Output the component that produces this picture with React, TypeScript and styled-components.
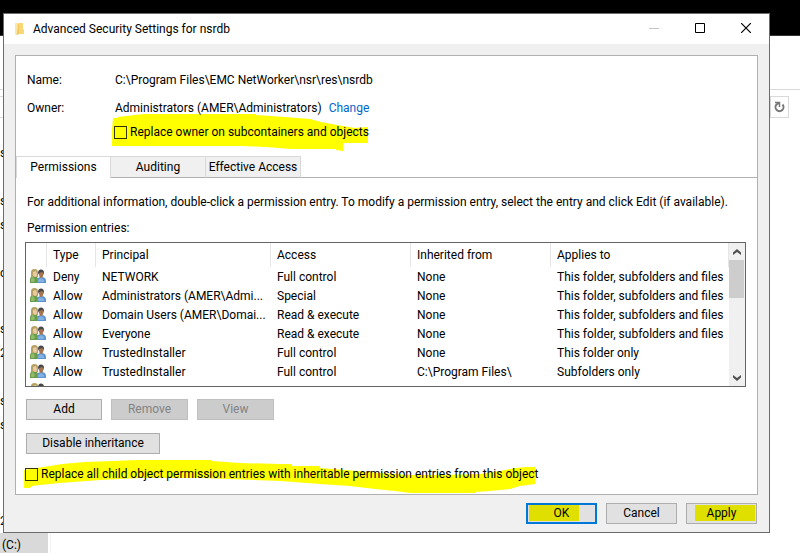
import React from 'react';
import styled, { createGlobalStyle } from 'styled-components';

const GlobalStyle = createGlobalStyle`
  *, *::before, *::after { box-sizing: border-box; }
  body { margin: 0; background: #fff; }
  body, button, input, table {
    font-family: Roboto, "Open Sans", sans-serif;
    font-size: 12px;
    line-height: 20px;
    color: #000;
  }
`;

const Desktop = styled.div`
  position: relative;
  isolation: isolate;
  min-height: 100vh;
  padding: 13px 30px 20px 3px;
  overflow: hidden;
`;

/* Explorer window that lies behind the dialog */
const Explorer = styled.div`
  position: absolute;
  inset: 0;
  z-index: -1;
  display: flex;
  flex-direction: column;
`;

const ExplorerTop = styled.div`
  flex: none;
  height: 36px;
  background: #000;
  border-bottom: 1px solid #333;
`;

const Ribbon = styled.div`
  flex: none;
  height: 54px;
  border-bottom: 1px solid #d9d9d9;
`;

const AddressBar = styled.div`
  flex: none;
  display: flex;
  justify-content: flex-end;
  height: 22px;
  margin: 6px 11px 23px 0;
  border: 1px solid #d9d9d9;
  border-left: 0;
`;

const RefreshButton = styled.button`
  display: flex;
  align-items: center;
  justify-content: center;
  width: 18px;
  padding: 0;
  border: 0;
  border-left: 1px solid #d9d9d9;
  background: #fff;
`;

const NavTree = styled.ul`
  width: 51px;
  flex: 1;
  margin: 0;
  padding: 0;
  list-style: none;
  border-right: 1px solid #f3f3f3;
`;

const NavItem = styled.li<{ $selected?: boolean; $newGroup?: boolean }>`
  height: 24px;
  width: 48px;
  line-height: 24px;
  margin-top: ${p => (p.$newGroup ? '32px' : '0')};
  padding-left: ${p => (p.$selected ? '2px' : '0')};
  background: ${p => (p.$selected ? '#d9d9d9' : 'transparent')};
`;

const Dialog = styled.main`
  display: flex;
  flex-direction: column;
  border: 1px solid #6b6b6b;
  background: #f0f0f0;
`;

const TitleBar = styled.header`
  display: flex;
  align-items: center;
  height: 30px;
  padding-left: 11px;
  background: #fff;
`;

const Title = styled.h1`
  flex: 1;
  margin: 0 0 0 8px;
  font-size: 12px;
  font-weight: 400;
`;

const CaptionButton = styled.button`
  display: flex;
  align-items: center;
  justify-content: center;
  width: 46px;
  height: 30px;
  padding: 0 0 2px;
  border: 0;
  background: transparent;
`;

const Body = styled.div`
  padding: 11px 11px 8px;
`;

const Panel = styled.section`
  position: relative;
  isolation: isolate;
  border: 1px solid #b0b0b0;
  background: #fff;
`;

const Summary = styled.dl`
  display: grid;
  grid-template-columns: 88px 1fr;
  margin: 0;
  padding: 10px 11px 0;
  line-height: 28px;
`;

const Term = styled.dt``;

const Detail = styled.dd`
  margin: 0;
  white-space: nowrap;
`;

const ChangeLink = styled.a`
  margin-left: 7px;
  color: #0066cc;
  text-decoration: none;
`;

const OwnerOption = styled.div`
  display: flex;
  padding: 0 0 14px 98px;
`;

const CheckLabel = styled.label`
  display: flex;
  align-items: center;
  gap: 3px;
  height: 20px;
  white-space: nowrap;
`;

const CheckBox = styled.input`
  appearance: none;
  flex: none;
  width: 13px;
  height: 13px;
  margin: 0;
  border: 1px solid #333300;
`;

const Marker = styled.svg<{ $place: 'owner' | 'inherit' }>`
  position: absolute;
  z-index: -1;
  left: ${p => (p.$place === 'owner' ? '96px' : '8px')};
  ${p => (p.$place === 'owner' ? 'top: 58px;' : 'bottom: 0;')}
  fill: #ffff00;
`;

const TabList = styled.div`
  display: flex;
  height: 22px;
`;

const Tab = styled.button<{ $active?: boolean }>`
  width: 95px;
  padding: ${p => (p.$active ? '0 0 1px' : '0')};
  border: solid #d9d9d9;
  border-width: 1px 1px 0 ${p => (p.$active ? '1px' : '0')};
  border-bottom: ${p => (p.$active ? '0' : '1px solid #b0b0b0')};
  background: ${p => (p.$active ? '#fff' : '#f0f0f0')};
  white-space: nowrap;
`;

const TabRule = styled.div`
  flex: 1;
  border-bottom: 1px solid #b0b0b0;
`;

const TabPage = styled.div`
  padding: 14px 11px 10px 9px;
`;

const Hint = styled.p`
  margin: 0 0 6px 2px;
  white-space: nowrap;
`;

const Caption = styled.p`
  margin: 0 0 4px 2px;
`;

const ListFrame = styled.div`
  display: flex;
  height: 145px;
  overflow: hidden;
  border: 1px solid #646464;
`;

const ListView = styled.div`
  flex: 1;
  min-width: 0;
  overflow: hidden;
`;

const Table = styled.table`
  width: 100%;
  table-layout: fixed;
  border-collapse: separate;
  border-spacing: 0;
`;

const Column = styled.col<{ $width?: number }>`
  width: ${p => (p.$width ? `${p.$width}px` : 'auto')};
`;

const HeadCell = styled.th`
  height: 24px;
  padding: 0 6px;
  border-right: 1px solid #e5e5e5;
  font-weight: 400;
  text-align: left;
`;

const Cell = styled.td`
  height: 19px;
  padding: 1px 0 0 6px;
  line-height: 18px;
  overflow: hidden;
  white-space: nowrap;
  text-overflow: ellipsis;
`;

const IconCell = styled.td`
  height: 19px;
  padding: 0 0 0 4px;
  line-height: 0;
`;

const ScrollBar = styled.div`
  display: flex;
  flex-direction: column;
  width: 16px;
  padding-right: 1px;
  background: #f0f0f0;
`;

const ScrollButton = styled.button`
  display: flex;
  align-items: center;
  justify-content: center;
  height: 17px;
  padding: 0;
  border: 0;
  background: transparent;
`;

const ScrollTrack = styled.div`
  flex: 1;
`;

const ScrollThumb = styled.div`
  height: 38px;
  background: #cdcdcd;
`;

const ButtonRow = styled.div<{ $top: number }>`
  display: flex;
  gap: 9px;
  margin: ${p => p.$top}px 0 0 1px;
`;

const PushButton = styled.button<{ $width: number; $default?: boolean }>`
  width: ${p => p.$width}px;
  height: 21px;
  padding: 0;
  border: ${p => (p.$default ? '2px solid #0078d7' : '1px solid #adadad')};
  background: #e1e1e1;
  line-height: 17px;
  &:disabled {
    border-color: #bfbfbf;
    background: #cccccc;
    color: #838383;
  }
`;

const OkButton = styled(PushButton)`
  background: linear-gradient(#e0e000, #e0e000) 1px 0 / 50px 16px no-repeat #e1e1e1;
`;

const ApplyButton = styled(PushButton)`
  background: linear-gradient(#e0e000, #e0e000) right 1px top 1px / 60px 16px no-repeat #e1e1e1;
`;

const InheritOption = styled.div`
  display: flex;
  margin-top: 10px;
`;

const Footer = styled.footer`
  display: flex;
  justify-content: flex-end;
  gap: 9px;
  padding: 8px 1px 0 0;
`;

const FolderIcon = () => (
  <svg width="10" height="14" viewBox="0 0 10 14" aria-hidden="true">
    <path d="M2 1h6v6l1 1v4H2z" fill="#f8d775" />
    <path d="M0 1h3l1 1v10l-2 1H1l-1-1z" fill="#fce6a6" />
    <path d="M3 2h1v10l-2 1z" fill="#efc65f" />
  </svg>
);

const UsersIcon = () => (
  <svg width="16" height="15" viewBox="0 0 16 15" aria-hidden="true">
    <path d="M0 14V11c0-3 1.500-4 4-4s4 1 4 4v3z" fill="#6b9c4b" />
    <path d="M1 13v-2c0-2 1-3 2-3l2 3-1 2z" fill="#8dbb69" />
    <path d="M1 8V4c0-3 1-4 3.500-4S8 1 8 4v4H6L4 7 2 8z" fill="#b5a262" />
    <path d="M3 3l3-1 1 3c0 2-1 3-2 3S3 7 3 5z" fill="#ecc9a2" />
    <path d="M7 14v-3c0-2 2-3 4.500-3S16 9 16 12v2z" fill="#5f95cf" />
    <path d="M8 13v-2l3-2 3 2v2z" fill="#82b2e2" />
    <path d="M8 4c0-2 1-3.500 3-3.500S14 2 14 4l-1 2H9z" fill="#484848" />
    <path d="M9 4l3-1 1.500 1c0 3-1 5-2.500 5S9 7 9 4z" fill="#a87450" />
  </svg>
);

const ArrowIcon = ({ down }: { down?: boolean }) => (
  <svg width="8" height="6" viewBox="0 0 8 6" aria-hidden="true">
    <path d={down ? 'M0 0l4 3 4-3v2.500L4 6 0 2.500z' : 'M0 6l4-3 4 3V3.500L4 0 0 3.500z'} fill="#505050" />
  </svg>
);

type Entry = [string, string, string, string, string];

const FULL_SCOPE = 'This folder, subfolders and files';

const entries: Entry[] = [
  ['Deny', 'NETWORK', 'Full control', 'None', FULL_SCOPE],
  ['Allow', 'Administrators (AMER\\Admi...', 'Special', 'None', FULL_SCOPE],
  ['Allow', 'Domain Users (AMER\\Domai...', 'Read & execute', 'None', FULL_SCOPE],
  ['Allow', 'Everyone', 'Read & execute', 'None', FULL_SCOPE],
  ['Allow', 'TrustedInstaller', 'Full control', 'None', 'This folder only'],
  ['Allow', 'TrustedInstaller', 'Full control', 'C:\\Program Files\\', 'Subfolders only'],
];

const shortcuts = ['s', '', 's', 's', '', 'o'];
const folders = ['s', '2', '', 's', 's', '', '', '', '2'];

export default function App() {
  return (
    <Desktop>
      <GlobalStyle />
      <Explorer>
        <ExplorerTop />
        <Ribbon />
        <AddressBar>
          <RefreshButton aria-label="Refresh">
            <svg width="11" height="12" viewBox="0 0 11 12" fill="none" stroke="#777" aria-hidden="true">
              <path d="M8.500 3.500a4 4 0 1 1-6 0L5 2" strokeWidth="2" />
              <path d="M1 1.500h4.500V6" strokeWidth="1.500" />
            </svg>
          </RefreshButton>
        </AddressBar>
        <NavTree>
          {shortcuts.map((name, i) => (
            <NavItem key={i}>{name}</NavItem>
          ))}
          {folders.map((name, i) => (
            <NavItem key={i} $newGroup={i === 0}>{name}</NavItem>
          ))}
          <NavItem $selected>(C:)</NavItem>
        </NavTree>
      </Explorer>

      <Dialog>
        <TitleBar>
          <FolderIcon />
          <Title>Advanced Security Settings for nsrdb</Title>
          <CaptionButton aria-label="Minimize" disabled>
            <svg width="11" height="11" aria-hidden="true"><path d="M0 5.500h10" stroke="#c4c4c4" /></svg>
          </CaptionButton>
          <CaptionButton aria-label="Maximize">
            <svg width="10" height="10" aria-hidden="true"><path d="M.5.5h9v9h-9z" fill="none" stroke="#000" /></svg>
          </CaptionButton>
          <CaptionButton aria-label="Close">
            <svg width="10" height="10" aria-hidden="true"><path d="M0 0l10 10M10 0L0 10" stroke="#000" strokeWidth="1.200" /></svg>
          </CaptionButton>
        </TitleBar>

        <Body>
          <Panel>
            <Marker $place="owner" width="256" height="38" viewBox="112 114 256 38" aria-hidden="true">
              <path d="M112 130l1-12h5v-1l9-1 7-1 11-1h111v1l29 2 25 2 11 3 16 3 18 3 13-1v16h-25v8l-7-1v-1h-45l-25-2-24-1H112z" />
            </Marker>
            <Marker $place="inherit" width="512" height="34" viewBox="24 460 512 34" aria-hidden="true">
              <path d="M24 470L37 468L50 466L62 464L85 462L112 461L138 460H212V461L240 463L280 464H292V466H320V468L345 470L380 473L410 475L440 475L480 474L500 471L515 468L526 467H535V484L520 486L510 489L490 491L475 492V493H410L395 491L375 489L350 486L320 484L280 481L200 478H140L100 480L60 483L40 485L32 486L30 488H24z" />
            </Marker>
            <Summary>
              <Term>Name:</Term>
              <Detail>C:\Program Files\EMC NetWorker\nsr\res\nsrdb</Detail>
              <Term>Owner:</Term>
              <Detail>
                Administrators (AMER\Administrators)
                <ChangeLink href="#owner">Change</ChangeLink>
              </Detail>
            </Summary>
            <OwnerOption>
              <CheckLabel>
                <CheckBox type="checkbox" />
                Replace owner on subcontainers and objects
              </CheckLabel>
            </OwnerOption>

            <TabList role="tablist">
              <Tab role="tab" aria-selected="true" $active>Permissions</Tab>
              <Tab role="tab" aria-selected="false">Auditing</Tab>
              <Tab role="tab" aria-selected="false">Effective Access</Tab>
              <TabRule />
            </TabList>

            <TabPage role="tabpanel">
              <Hint>
                For additional information, double-click a permission entry. To modify a permission
                entry, select the entry and click Edit (if available).
              </Hint>
              <Caption id="entries-caption">Permission entries:</Caption>
              <ListFrame>
                <ListView>
                  <Table aria-labelledby="entries-caption">
                    <colgroup>
                      <Column $width={21} />
                      <Column $width={49} />
                      <Column $width={175} />
                      <Column $width={140} />
                      <Column $width={140} />
                      <Column />
                    </colgroup>
                    <thead>
                      <tr>
                        <HeadCell />
                        <HeadCell>Type</HeadCell>
                        <HeadCell>Principal</HeadCell>
                        <HeadCell>Access</HeadCell>
                        <HeadCell>Inherited from</HeadCell>
                        <HeadCell>Applies to</HeadCell>
                      </tr>
                    </thead>
                    <tbody>
                      {entries.map((entry, row) => (
                        <tr key={row}>
                          <IconCell><UsersIcon /></IconCell>
                          {entry.map((value, i) => <Cell key={i}>{value}</Cell>)}
                        </tr>
                      ))}
                      <tr>
                        <IconCell><UsersIcon /></IconCell>
                      </tr>
                    </tbody>
                  </Table>
                </ListView>
                <ScrollBar>
                  <ScrollButton aria-label="Scroll up"><ArrowIcon /></ScrollButton>
                  <ScrollTrack><ScrollThumb /></ScrollTrack>
                  <ScrollButton aria-label="Scroll down"><ArrowIcon down /></ScrollButton>
                </ScrollBar>
              </ListFrame>
              <ButtonRow $top={12}>
                <PushButton $width={76}>Add</PushButton>
                <PushButton $width={77} disabled>Remove</PushButton>
                <PushButton $width={77} disabled>View</PushButton>
              </ButtonRow>
              <ButtonRow $top={13}>
                <PushButton $width={134}>Disable inheritance</PushButton>
              </ButtonRow>
              <InheritOption>
                <CheckLabel>
                  <CheckBox type="checkbox" />
                  Replace all child object permission entries with inheritable permission entries from this object
                </CheckLabel>
              </InheritOption>
            </TabPage>
          </Panel>

          <Footer>
            <OkButton $width={71} $default>OK</OkButton>
            <PushButton $width={71}>Cancel</PushButton>
            <ApplyButton $width={71}>Apply</ApplyButton>
          </Footer>
        </Body>
      </Dialog>
    </Desktop>
  );
}
